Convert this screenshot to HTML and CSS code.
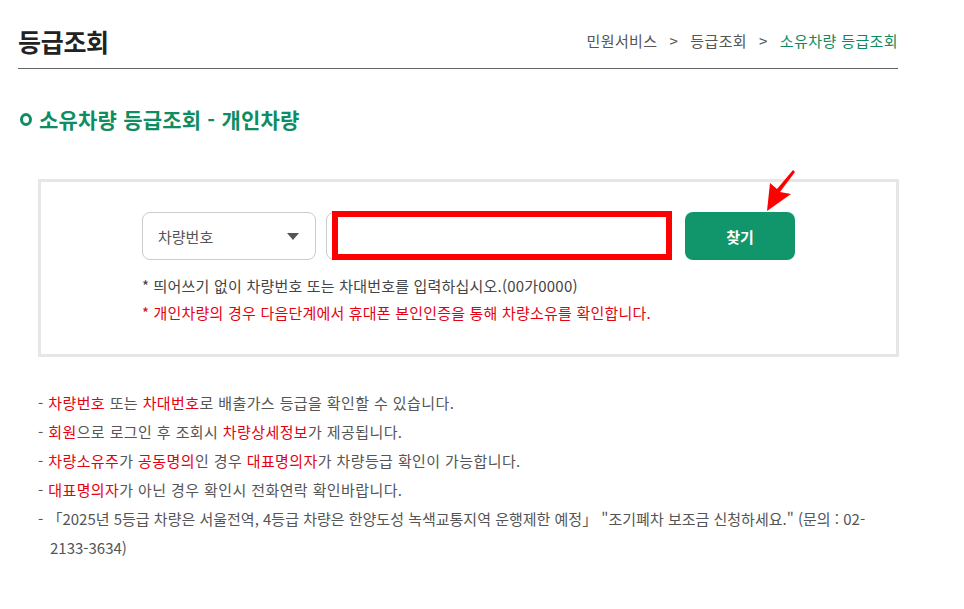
FILE: index.html
```html
<!DOCTYPE html>
<html lang="ko">
<head>
<meta charset="utf-8">
<title>등급조회</title>
<link rel="stylesheet" href="styles.css">
</head>
<body>
<div class="page">
  <header class="page-head">
    <h1 class="page-title">등급조회</h1>
    <nav class="crumbs">
      <span>민원서비스</span><span class="sep">&gt;</span><span>등급조회</span><span class="sep">&gt;</span><span class="current">소유차량 등급조회</span>
    </nav>
  </header>

  <h2 class="sec-title"><span class="ring"></span>소유차량 등급조회 - 개인차량</h2>

  <div class="search-box">
    <div class="search-row">
      <div class="select">
        <span>차량번호</span>
        <span class="caret"></span>
      </div>
      <div class="input-wrap">
        <div class="input"></div>
        <div class="highlight"></div>
      </div>
      <div class="btn-wrap">
        <button class="btn">찾기</button>
        <svg class="pointer" width="40" height="50" viewBox="0 0 40 50">
          <polygon points="7,46 10,18 17,24 33,5 35,7 20,27 31,29" fill="#ff0000"/>
        </svg>
      </div>
    </div>
    <p class="help">* 띄어쓰기 없이 차량번호 또는 차대번호를 입력하십시오.(00가0000)</p>
    <p class="help warn">* 개인차량의 경우 다음단계에서 휴대폰 본인인증을 통해 차량소유를 확인합니다.</p>
  </div>

  <ul class="notes">
    <li>- <em>차량번호</em> 또는 <em>차대번호</em>로 배출가스 등급을 확인할 수 있습니다.</li>
    <li>- <em>회원</em>으로 로그인 후 조회시 <em>차량상세정보</em>가 제공됩니다.</li>
    <li>- <em>차량소유주</em>가 <em>공동명의</em>인 경우 <em>대표명의자</em>가 차량등급 확인이 가능합니다.</li>
    <li>- <em>대표명의자</em>가 아닌 경우 확인시 전화연락 확인바랍니다.</li>
    <li class="tight">- 「2025년 5등급 차량은 서울전역, 4등급 차량은 한양도성 녹색교통지역 운행제한 예정」 "조기폐차 보조금 신청하세요." (문의 : 02-<wbr>2133-3634)</li>
  </ul>
</div>
</body>
</html>
```

FILE: styles.css
```css
* { box-sizing: border-box; }

body {
  margin: 0;
  background: #fff;
  font-family: "Noto Sans CJK KR", "Noto Sans", sans-serif;
  color: #555;
}

.page {
  width: 964px;
  padding-left: 18px;
}

.page-head {
  width: 880px;
  height: 69px;
  padding-top: 13px;
  border-bottom: 1px solid #666;
  display: flex;
  align-items: center;
  justify-content: space-between;
}

.page-title {
  margin: 0;
  font-size: 25px;
  font-weight: 700;
  letter-spacing: -0.3px;
  color: #222;
  line-height: 30px;
}

.crumbs {
  font-size: 15px;
  color: #555;
  display: flex;
  align-items: center;
  letter-spacing: 0.4px;
}

.crumbs .sep {
  margin: 0 12px;
}

.crumbs .current {
  color: #0e8a5f;
}

.sec-title {
  margin: 36px 0 0 2px;
  font-size: 21px;
  font-weight: 700;
  line-height: 28px;
  color: #0e8d62;
  display: flex;
  align-items: center;
  letter-spacing: 0.2px;
}

.ring {
  width: 12px;
  height: 13px;
  border: 3px solid #0e8d62;
  border-radius: 50%;
  margin-right: 7px;
}

.search-box {
  width: 861px;
  margin: 46px 0 0 20px;
  border: 3px solid #e6e6e6;
  padding: 30px 0 28px 101px;
}

.search-row {
  display: flex;
  align-items: stretch;
  height: 48px;
}

.select {
  width: 174px;
  border: 1px solid #ccc;
  border-radius: 8px;
  display: flex;
  align-items: center;
  justify-content: space-between;
  padding: 0 16px 0 15px;
  font-size: 15px;
  color: #555;
}

.caret {
  width: 0;
  height: 0;
  border-left: 6px solid transparent;
  border-right: 6px solid transparent;
  border-top: 7px solid #555;
}

.input-wrap {
  position: relative;
  width: 346px;
  margin-left: 10px;
}

.input {
  height: 100%;
  border: 1px solid #ccc;
  border-radius: 8px;
  background: #fff;
}

.highlight {
  position: absolute;
  left: 6px;
  top: -1px;
  width: 340px;
  height: 49px;
  border: 6px solid #ff0000;
}

.btn-wrap {
  position: relative;
  margin-left: 13px;
}

.btn {
  width: 110px;
  height: 48px;
  border: 0;
  border-radius: 8px;
  background: #11966c;
  color: #fff;
  font-family: inherit;
  font-size: 15px;
  font-weight: 700;
}

.pointer {
  position: absolute;
  left: 75px;
  top: -47px;
}

.help {
  margin: 12px 0 0;
  font-size: 15px;
  line-height: 27px;
  color: #444;
  letter-spacing: 0.2px;
}

.help.warn {
  margin-top: 0;
  color: #e60012;
}

.notes {
  list-style: none;
  margin: 31px 0 0 20px;
  padding: 0;
  width: 840px;
  font-size: 15px;
  line-height: 29px;
  color: #555;
  letter-spacing: 0.4px;
}

.notes li {
  padding-left: 12px;
  text-indent: -12px;
}

.notes li.tight {
  letter-spacing: 0;
}

.notes em {
  font-style: normal;
  color: #e60012;
}
```
